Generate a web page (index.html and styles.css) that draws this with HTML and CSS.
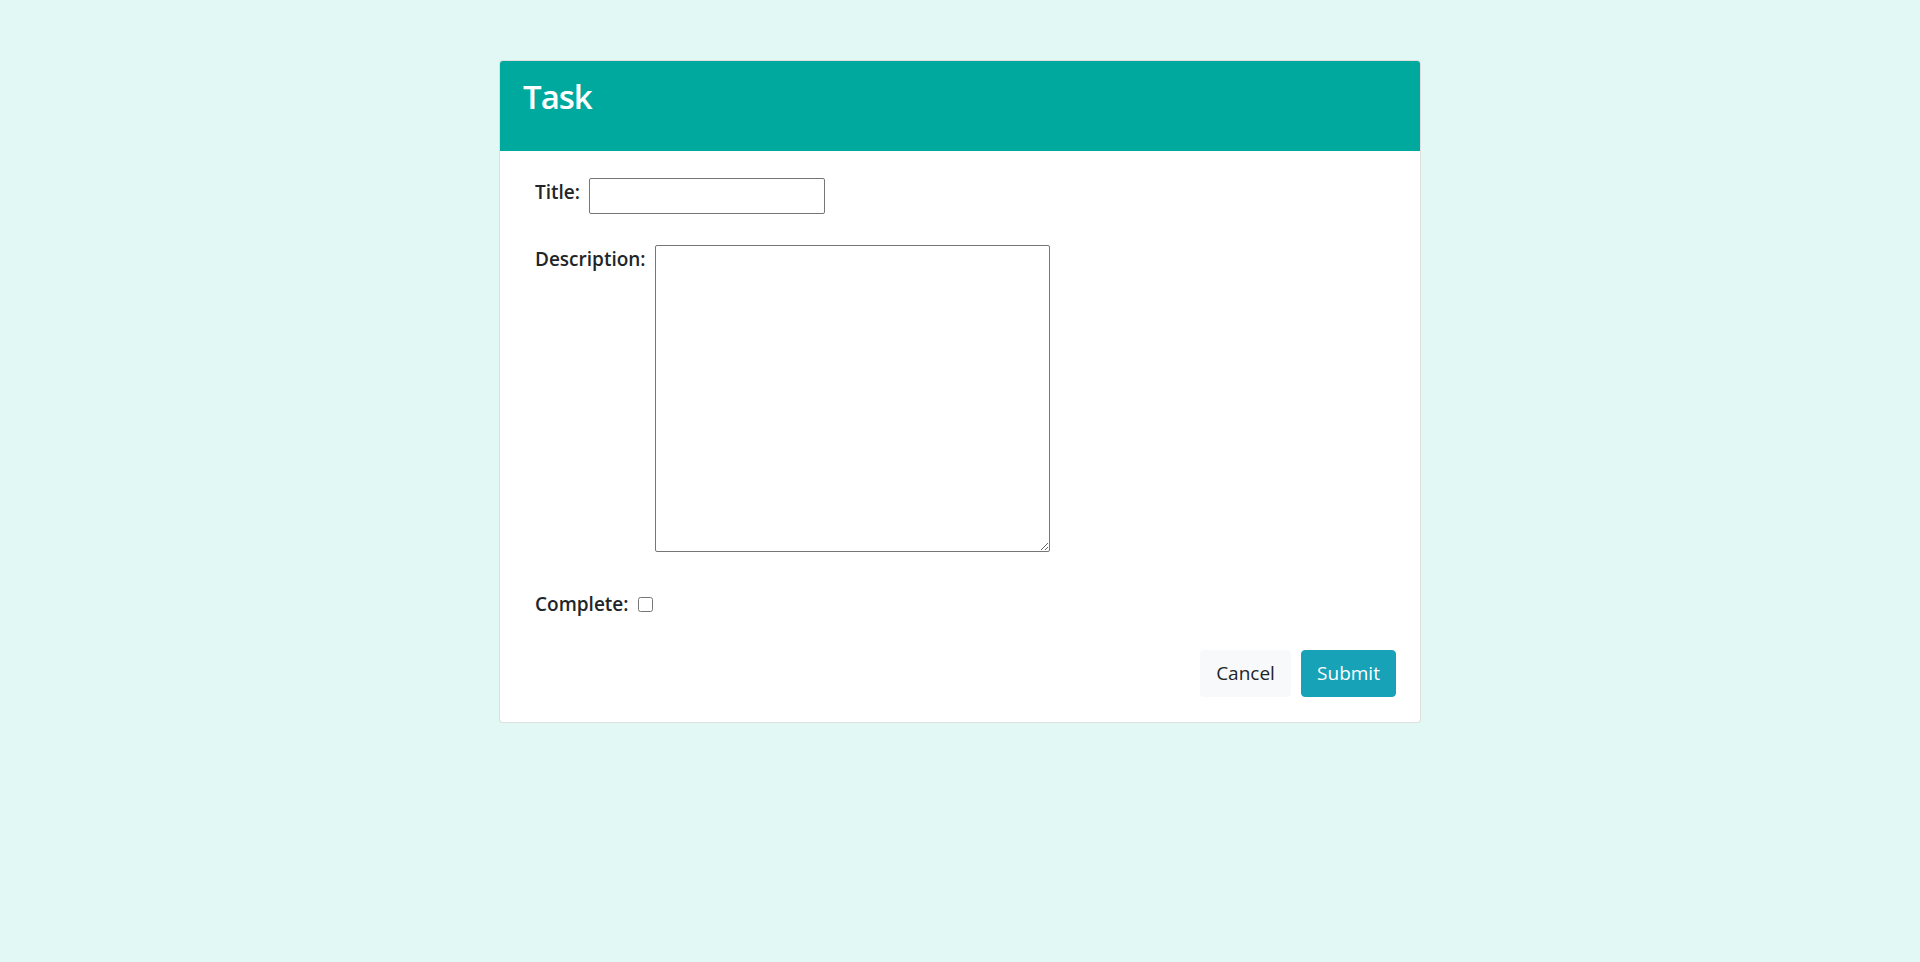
FILE: index.html
```html
<!DOCTYPE html>
<html lang="en">
<head>
<meta charset="utf-8">
<title>Task</title>
<link rel="stylesheet" href="styles.css">
</head>
<body>
  <div class="card">
    <div class="card-header">
      <h1 class="card-title">Task</h1>
    </div>
    <div class="card-body">
      <form class="task-form">
        <div class="row row-title">
          <label class="label" for="title">Title:</label>
          <input class="text-input" id="title" type="text">
        </div>
        <div class="row row-desc">
          <label class="label" for="desc">Description:</label>
          <textarea class="textarea" id="desc"></textarea>
        </div>
        <div class="row row-complete">
          <label class="label" for="complete">Complete:</label>
          <input class="checkbox" id="complete" type="checkbox">
        </div>
        <div class="actions">
          <button type="button" class="btn btn-light">Cancel</button>
          <button type="submit" class="btn btn-info">Submit</button>
        </div>
      </form>
    </div>
  </div>
</body>
</html>
```

FILE: styles.css
```css
* { box-sizing: border-box; }

html, body {
  margin: 0;
  padding: 0;
}

body {
  background: #e2f8f5;
  font-family: "Open Sans", "Noto Sans", "Liberation Sans", sans-serif;
  color: #212529;
  font-size: 19px;
  line-height: 1.5;
}

.card {
  width: 922px;
  margin: 60px auto 0;
  background: #fff;
  border: 1px solid rgba(0, 0, 0, 0.125);
  border-radius: 4px;
  overflow: hidden;
}

.card-header {
  background: #00a99e;
  height: 90px;
  padding: 16px 23px 0;
}

.card-title {
  margin: 0;
  color: #fff;
  font-size: 33px;
  font-weight: 600;
  line-height: 40px;
  letter-spacing: -1px;
}

.card-body {
  padding: 27px 24px 25px 35px;
}

.task-form {
  display: flex;
  flex-direction: column;
}

.row {
  display: flex;
  align-items: flex-start;
  gap: 9px;
}

.label {
  font-weight: 600;
  font-size: 19px;
  line-height: 28px;
}

.text-input {
  width: 236px;
  height: 36px;
  margin: 0;
  border: 1px solid #767676;
  border-radius: 2px;
  padding: 1px 3px;
  font: inherit;
  background: #fff;
}

.row-desc { margin-top: 31px; }

.textarea {
  width: 395px;
  height: 307px;
  margin: 0;
  border: 1px solid #767676;
  border-radius: 2px;
  padding: 2px;
  font: inherit;
  background: #fff;
}

.row-complete {
  margin-top: 38px;
  align-items: center;
  gap: 9px;
}

.checkbox {
  width: 15px;
  height: 15px;
  margin: 1px 0 0;
}

.actions {
  margin-top: 32px;
  display: flex;
  justify-content: flex-end;
  gap: 10px;
}

.btn {
  height: 47px;
  padding: 0;
  border: 1px solid transparent;
  border-radius: 4px;
  font-family: inherit;
  font-size: 19px;
  line-height: 1.5;
}

.btn-light {
  background: #f8f9fa;
  border-color: #f8f9fa;
  color: #212529;
  width: 91px;
}

.btn-info {
  background: #17a2b8;
  border-color: #17a2b8;
  color: #fff;
  width: 95px;
}
```
